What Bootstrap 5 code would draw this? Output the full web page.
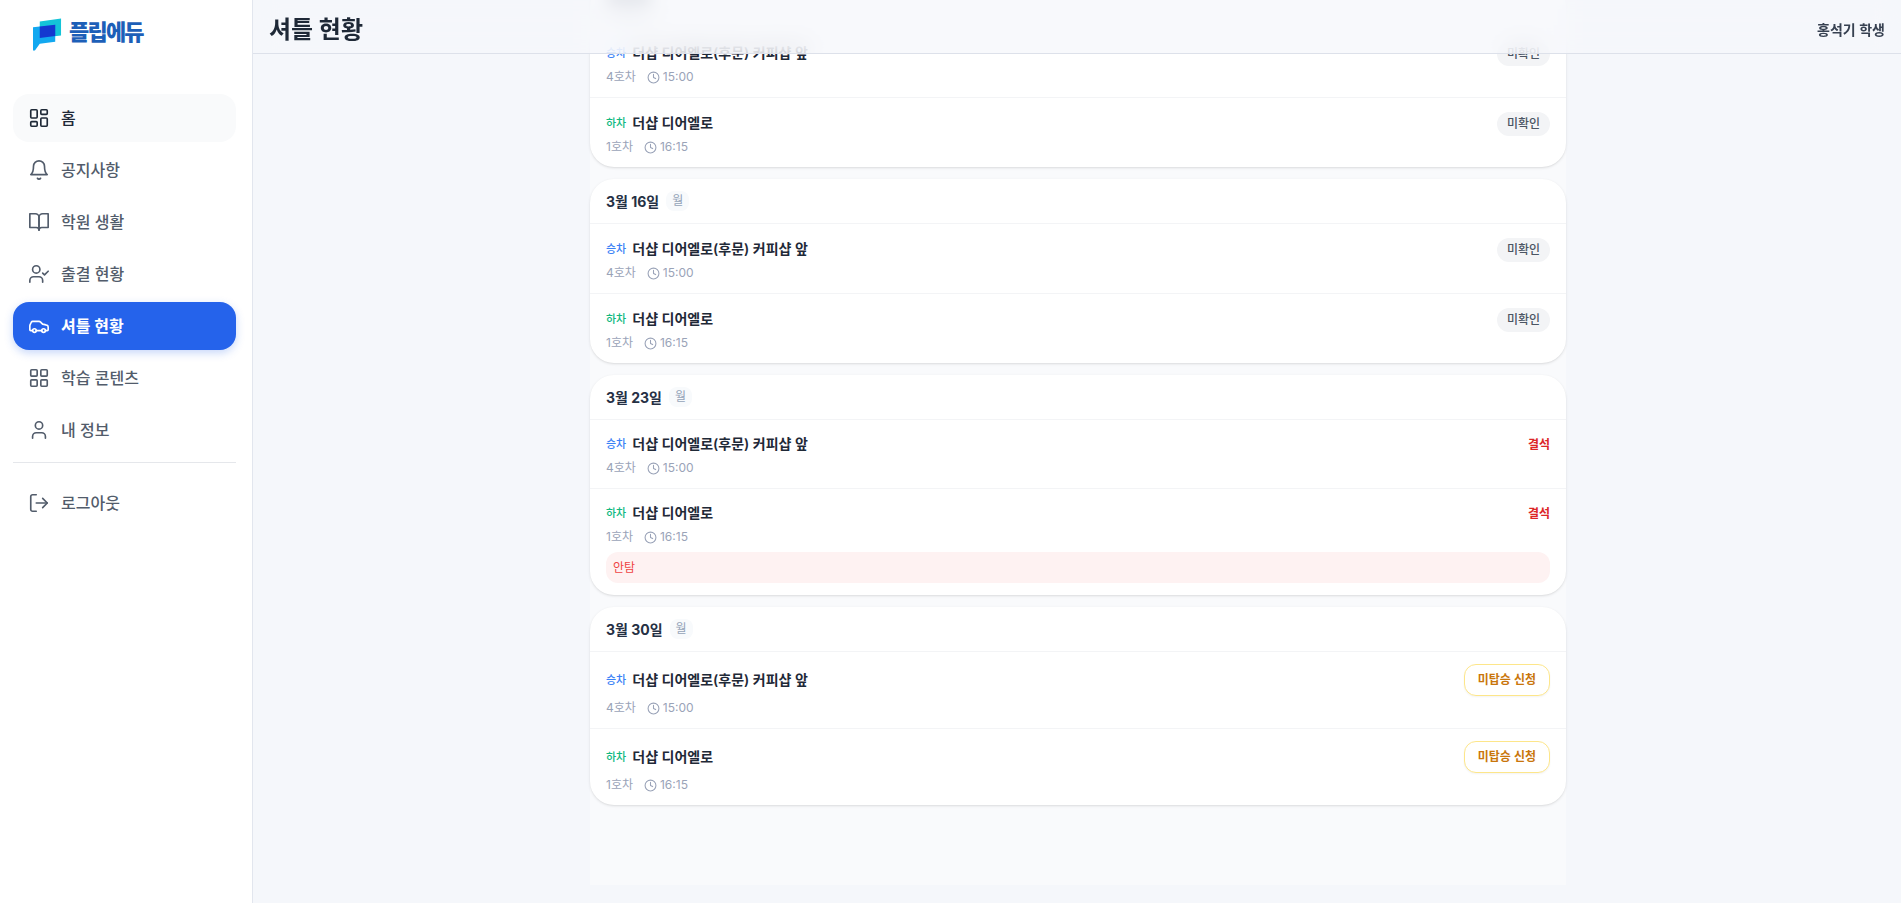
<!DOCTYPE html>
<html lang="ko">
<head>
  <meta charset="UTF-8">
  <title>셔틀 현황</title>
  <meta name="viewport" content="width=device-width, initial-scale=1">
  <link href="https://cdn.jsdelivr.net/npm/bootstrap@5.3.0/dist/css/bootstrap.min.css" rel="stylesheet">
  <style>
    body {
      font-family: Inter, "Noto Sans CJK KR", sans-serif;
      background-color: #f5f7fb;
      color: #111827;
    }
    .ico {
      width: 22px;
      height: 22px;
      fill: none;
      stroke: currentColor;
      stroke-width: 1.8;
      stroke-linecap: round;
      stroke-linejoin: round;
      flex-shrink: 0;
    }
    .side-bar {
      width: 253px;
      flex-shrink: 0;
      background-color: #fff;
      border-right: 1px solid #e2e6ee;
      padding: 0 16px 0 13px;
    }
    .logo-box {
      height: 94px;
      padding: 18px 0 0 20px;
      gap: 7px;
    }
    .logo-text {
      font-size: 22px;
      font-weight: 900;
      letter-spacing: -1.8px;
      color: #1d5fb8;
      line-height: 28px;
    }
    .side-link {
      height: 48px;
      margin-bottom: 4px;
      padding-left: 15px;
      gap: 11px;
      border-radius: 16px;
      font-size: 16px;
      font-weight: 500;
      color: #525c6b;
      text-decoration: none;
    }
    .side-link.is-home {
      background-color: #f9fafb;
      color: #1f2937;
    }
    .side-link.is-on {
      background-color: #2563eb;
      color: #fff;
      font-weight: 700;
      box-shadow: 0 3px 8px rgba(37, 99, 235, .25);
    }
    .side-line {
      border-top: 1px solid #e5e7eb;
      margin: 8px 0 16px;
    }
    .main-area {
      padding-left: 2px;
    }
    .top-bar {
      height: 54px;
      padding: 6px 16px 0;
      background-color: rgba(245, 247, 251, .72);
      -webkit-backdrop-filter: blur(12px);
      backdrop-filter: blur(12px);
      border-bottom: 1px solid #dde1ea;
    }
    .top-title {
      font-size: 24px;
      font-weight: 700;
      color: #1f2937;
      margin: 2px 0 0;
    }
    .top-user {
      font-size: 14px;
      font-weight: 600;
      color: #374151;
    }
    .day-panel {
      width: 976px;
      margin: -17px auto 0;
      padding-bottom: 80px;
      background-color: #f9fafc;
    }
    .day-card {
      background-color: #fff;
      border-radius: 24px;
      box-shadow: 0 1px 3px rgba(0, 0, 0, .1), 0 1px 2px -1px rgba(0, 0, 0, .1);
      margin-bottom: 12px;
      overflow: hidden;
    }
    .day-card:last-child {
      margin-bottom: 0;
    }
    .day-head {
      height: 44px;
      padding: 0 16px;
      gap: 7px;
    }
    .day-date {
      font-size: 14px;
      font-weight: 700;
      color: #253044;
    }
    .day-week {
      font-size: 12px;
      line-height: 16px;
      color: #94a3b8;
      background-color: #f8fafc;
      border-radius: 8px;
      padding: 2px 6px;
    }
    /* date of the card scrolled under the top bar, only a smudge shows through */
    .head-smudge {
      width: 46px;
      height: 14px;
      margin-top: -6px;
      background-color: #9ca3af;
      border-radius: 7px;
      filter: blur(7px);
    }
    .ride-row {
      border-top: 1px solid #f3f4f6;
      padding: 12px 16px 11px;
    }
    .ride-main {
      min-height: 26px;
      gap: 6px;
    }
    .ride-main.is-short {
      min-height: 25px;
    }
    .ride-main.is-tall {
      min-height: 33px;
    }
    .ride-kind {
      font-size: 11px;
      font-weight: 500;
    }
    .kind-up {
      color: #3b82f6;
    }
    .kind-down {
      color: #10b981;
    }
    .ride-name {
      font-size: 14px;
      font-weight: 600;
      color: #1f2937;
      margin-bottom: 2px;
    }
    .ride-meta {
      font-size: 12px;
      color: #9aa3b8;
      line-height: 18px;
      margin-top: 2px;
      gap: 11px;
    }
    .ride-meta .ico {
      width: 13px;
      height: 13px;
      stroke-width: 2;
    }
    .ride-time {
      gap: 3px;
    }
    .state-pill {
      font-size: 12px;
      font-weight: 500;
      color: #4b5563;
      background-color: #f3f4f6;
      border-radius: 12px;
      padding: 4px 10px;
      line-height: 16px;
      margin-top: 2px;
    }
    .state-absent {
      font-size: 12px;
      font-weight: 600;
      color: #dc2626;
    }
    .late-btn {
      height: 32px;
      font-size: 12px;
      font-weight: 600;
      color: #c9760c;
      background-color: #fff;
      border: 1px solid #fde68a;
      border-radius: 12px;
      padding: 0 13px;
      box-shadow: 0 1px 2px rgba(0, 0, 0, .05);
    }
    .ride-note {
      font-size: 12px;
      color: #ef4444;
      background-color: #fef2f2;
      border-radius: 12px;
      padding: 7px;
      line-height: 17px;
      margin: 6px 0 1px;
    }
  </style>
</head>
<body>

<svg class="d-none">
  <symbol id="i-dash" viewBox="0 0 24 24"><rect x="3" y="3" width="7" height="9" rx="1"/><rect x="14" y="3" width="7" height="5" rx="1"/><rect x="14" y="12" width="7" height="9" rx="1"/><rect x="3" y="16" width="7" height="5" rx="1"/></symbol>
  <symbol id="i-bell" viewBox="0 0 24 24"><path d="M6 8a6 6 0 0 1 12 0c0 7 3 9 3 9H3s3-2 3-9"/><path d="M10.3 21a1.94 1.94 0 0 0 3.4 0"/></symbol>
  <symbol id="i-book" viewBox="0 0 24 24"><path d="M2 3h6a4 4 0 0 1 4 4v14a3 3 0 0 0-3-3H2z"/><path d="M22 3h-6a4 4 0 0 0-4 4v14a3 3 0 0 1 3-3h7z"/></symbol>
  <symbol id="i-check" viewBox="0 0 24 24"><path d="M16 21v-2a4 4 0 0 0-4-4H6a4 4 0 0 0-4 4v2"/><circle cx="9" cy="7" r="4"/><polyline points="16 11 18 13 22 9"/></symbol>
  <symbol id="i-car" viewBox="0 0 24 24"><path d="M19 17h2c.6 0 1-.4 1-1v-3c0-.9-.7-1.7-1.5-1.9C18.7 10.6 16 10 16 10s-1.3-1.4-2.2-2.3c-.5-.4-1.1-.7-1.8-.7H5c-.6 0-1.1.4-1.4.9l-1.4 2.9A3.7 3.7 0 0 0 2 12v4c0 .6.4 1 1 1h2"/><circle cx="7" cy="17" r="2"/><path d="M9 17h6"/><circle cx="17" cy="17" r="2"/></symbol>
  <symbol id="i-grid" viewBox="0 0 24 24"><rect x="3" y="3" width="7" height="7" rx="1"/><rect x="14" y="3" width="7" height="7" rx="1"/><rect x="14" y="14" width="7" height="7" rx="1"/><rect x="3" y="14" width="7" height="7" rx="1"/></symbol>
  <symbol id="i-user" viewBox="0 0 24 24"><path d="M19 21v-2a4 4 0 0 0-4-4H9a4 4 0 0 0-4 4v2"/><circle cx="12" cy="7" r="4"/></symbol>
  <symbol id="i-out" viewBox="0 0 24 24"><path d="M9 21H5a2 2 0 0 1-2-2V5a2 2 0 0 1 2-2h4"/><polyline points="16 17 21 12 16 7"/><line x1="21" y1="12" x2="9" y2="12"/></symbol>
  <symbol id="i-clock" viewBox="0 0 24 24"><circle cx="12" cy="12" r="10"/><polyline points="12 6 12 12 16 14"/></symbol>
</svg>

<div class="d-flex vh-100 overflow-hidden">

  <!-- Sidebar -->
  <aside class="side-bar">
    <div class="logo-box d-flex align-items-start">
      <svg width="29" height="33" viewBox="0 0 30 34">
        <path d="M7 3.5 29 0.5V18L7 20.5z" fill="#14c4d8"/>
        <path d="M0 9.5 23 7V24.5L7 26.5 2 33.5H0z" fill="#12a8f0"/>
        <path d="M7 8.8 23 7V18.5L7 20.5z" fill="#1438d0"/>
      </svg>
      <span class="logo-text">플립에듀</span>
    </div>
    <nav>
      <a href="#" class="side-link is-home d-flex align-items-center"><svg class="ico"><use href="#i-dash"/></svg>홈</a>
      <a href="#" class="side-link d-flex align-items-center"><svg class="ico"><use href="#i-bell"/></svg>공지사항</a>
      <a href="#" class="side-link d-flex align-items-center"><svg class="ico"><use href="#i-book"/></svg>학원 생활</a>
      <a href="#" class="side-link d-flex align-items-center"><svg class="ico"><use href="#i-check"/></svg>출결 현황</a>
      <a href="#" class="side-link is-on d-flex align-items-center"><svg class="ico"><use href="#i-car"/></svg>셔틀 현황</a>
      <a href="#" class="side-link d-flex align-items-center"><svg class="ico"><use href="#i-grid"/></svg>학습 콘텐츠</a>
      <a href="#" class="side-link d-flex align-items-center"><svg class="ico"><use href="#i-user"/></svg>내 정보</a>
      <div class="side-line"></div>
      <a href="#" class="side-link d-flex align-items-center"><svg class="ico"><use href="#i-out"/></svg>로그아웃</a>
    </nav>
  </aside>

  <!-- Main -->
  <main class="main-area flex-grow-1 position-relative overflow-hidden">
    <header class="top-bar position-absolute top-0 start-0 end-0 z-1 d-flex align-items-center justify-content-between">
      <h1 class="top-title">셔틀 현황</h1>
      <span class="top-user">홍석기 학생</span>
    </header>

    <div class="day-panel">

      <div class="day-card">
        <div class="day-head d-flex align-items-center"><span class="head-smudge"></span></div>
        <div class="ride-row">
          <div class="ride-main d-flex align-items-center">
            <span class="ride-kind kind-up">승차</span><span class="ride-name">더샵 디어엘로(후문) 커피샵 앞</span>
            <span class="state-pill ms-auto">미확인</span>
          </div>
          <div class="ride-meta d-flex align-items-center"><span>4호차</span><span class="ride-time d-flex align-items-center"><svg class="ico"><use href="#i-clock"/></svg>15:00</span></div>
        </div>
        <div class="ride-row">
          <div class="ride-main d-flex align-items-center">
            <span class="ride-kind kind-down">하차</span><span class="ride-name">더샵 디어엘로</span>
            <span class="state-pill ms-auto">미확인</span>
          </div>
          <div class="ride-meta d-flex align-items-center"><span>1호차</span><span class="ride-time d-flex align-items-center"><svg class="ico"><use href="#i-clock"/></svg>16:15</span></div>
        </div>
      </div>

      <div class="day-card">
        <div class="day-head d-flex align-items-center"><span class="day-date">3월 16일</span><span class="day-week">월</span></div>
        <div class="ride-row">
          <div class="ride-main d-flex align-items-center">
            <span class="ride-kind kind-up">승차</span><span class="ride-name">더샵 디어엘로(후문) 커피샵 앞</span>
            <span class="state-pill ms-auto">미확인</span>
          </div>
          <div class="ride-meta d-flex align-items-center"><span>4호차</span><span class="ride-time d-flex align-items-center"><svg class="ico"><use href="#i-clock"/></svg>15:00</span></div>
        </div>
        <div class="ride-row">
          <div class="ride-main d-flex align-items-center">
            <span class="ride-kind kind-down">하차</span><span class="ride-name">더샵 디어엘로</span>
            <span class="state-pill ms-auto">미확인</span>
          </div>
          <div class="ride-meta d-flex align-items-center"><span>1호차</span><span class="ride-time d-flex align-items-center"><svg class="ico"><use href="#i-clock"/></svg>16:15</span></div>
        </div>
      </div>

      <div class="day-card">
        <div class="day-head d-flex align-items-center"><span class="day-date">3월 23일</span><span class="day-week">월</span></div>
        <div class="ride-row">
          <div class="ride-main is-short d-flex align-items-center">
            <span class="ride-kind kind-up">승차</span><span class="ride-name">더샵 디어엘로(후문) 커피샵 앞</span>
            <span class="state-absent ms-auto">결석</span>
          </div>
          <div class="ride-meta d-flex align-items-center"><span>4호차</span><span class="ride-time d-flex align-items-center"><svg class="ico"><use href="#i-clock"/></svg>15:00</span></div>
        </div>
        <div class="ride-row">
          <div class="ride-main is-short d-flex align-items-center">
            <span class="ride-kind kind-down">하차</span><span class="ride-name">더샵 디어엘로</span>
            <span class="state-absent ms-auto">결석</span>
          </div>
          <div class="ride-meta d-flex align-items-center"><span>1호차</span><span class="ride-time d-flex align-items-center"><svg class="ico"><use href="#i-clock"/></svg>16:15</span></div>
          <div class="ride-note">안탐</div>
        </div>
      </div>

      <div class="day-card">
        <div class="day-head d-flex align-items-center"><span class="day-date">3월 30일</span><span class="day-week">월</span></div>
        <div class="ride-row">
          <div class="ride-main is-tall d-flex align-items-center">
            <span class="ride-kind kind-up">승차</span><span class="ride-name">더샵 디어엘로(후문) 커피샵 앞</span>
            <button type="button" class="late-btn ms-auto align-self-start">미탑승 신청</button>
          </div>
          <div class="ride-meta d-flex align-items-center"><span>4호차</span><span class="ride-time d-flex align-items-center"><svg class="ico"><use href="#i-clock"/></svg>15:00</span></div>
        </div>
        <div class="ride-row">
          <div class="ride-main is-tall d-flex align-items-center">
            <span class="ride-kind kind-down">하차</span><span class="ride-name">더샵 디어엘로</span>
            <button type="button" class="late-btn ms-auto align-self-start">미탑승 신청</button>
          </div>
          <div class="ride-meta d-flex align-items-center"><span>1호차</span><span class="ride-time d-flex align-items-center"><svg class="ico"><use href="#i-clock"/></svg>16:15</span></div>
        </div>
      </div>

    </div>
  </main>
</div>

<script src="https://cdn.jsdelivr.net/npm/bootstrap@5.3.0/dist/js/bootstrap.bundle.min.js"></script>
</body>
</html>
